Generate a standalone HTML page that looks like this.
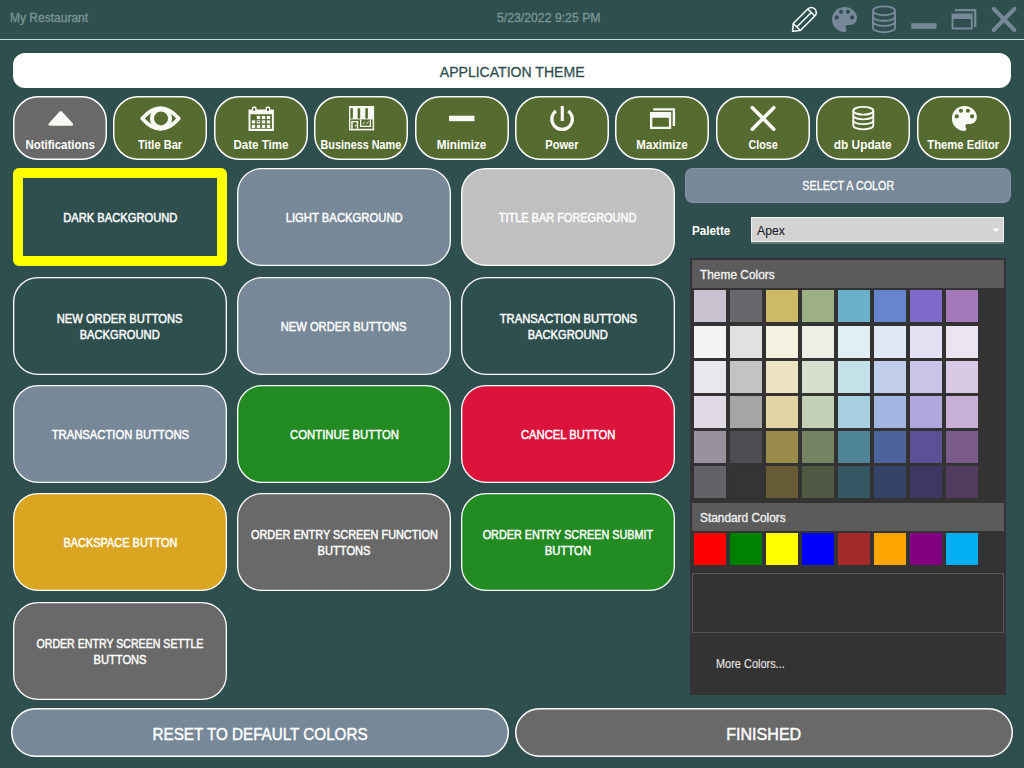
<!DOCTYPE html><html><head><meta charset="utf-8"><title>Application Theme</title><style>
*{margin:0;padding:0;box-sizing:border-box}
html,body{width:1024px;height:768px;overflow:hidden;background:#2F4F4F;font-family:"Liberation Sans",sans-serif}
.a{position:absolute}
.tx{position:absolute;white-space:nowrap;color:#fff;height:20px;line-height:20px}
.tx span{display:inline-block}
.tb{position:absolute;top:96px;width:94px;height:64px;border:1px solid #fff;box-shadow:inset 0 0 0 1px rgba(255,255,255,.35);border-radius:25px;background:#556B2F}
.gb{position:absolute;width:214px;height:98px;border:1px solid #fff;box-shadow:inset 0 0 0 1px rgba(255,255,255,.3);border-radius:25px}
.sw{position:absolute;width:32px;height:32px}
</style></head><body><div class="tx" style="left:10.20px;top:7.87px;font-size:12.5px;font-weight:400;color:#7C9696"><span id="t_rest" style="transform:scaleX(0.9610);transform-origin:0 50%;-webkit-text-stroke:0.3px #7C9696;">My Restaurant</span></div><div class="tx" style="left:496.80px;top:7.67px;font-size:12.5px;font-weight:400;color:#7C9696"><span id="t_date" style="transform:scaleX(0.9800);transform-origin:0 50%;-webkit-text-stroke:0.3px #7C9696;">5/23/2022 9:25 PM</span></div><div class="a" style="left:0;top:39px;width:1024px;height:1px;background:#C4DEDE"></div><div class="a" style="left:13px;top:53px;width:998px;height:35px;border-radius:12px;background:#fff"></div><div class="tx" style="left:212.20px;width:600px;text-align:center;top:61.64px;font-size:14.6px;font-weight:400;color:#2F4F4F"><span id="t_app" style="transform:scaleX(0.9633);-webkit-text-stroke:0.3px #2F4F4F;">APPLICATION THEME</span></div><svg class="a" style="left:11.00px;top:94.00px" width="98.00" height="68.00"><rect x="2.75" y="2.75" width="92.50" height="62.50" rx="24.25" fill="#696969" stroke="#FFFFFF" stroke-width="1.5"/></svg><div class="tx" style="left:-240.00px;width:600px;text-align:center;top:134.53px;font-size:12.6px;font-weight:700;color:#FFFFFF"><span id="t_tb0" style="transform:scaleX(0.9079);">Notifications</span></div><svg class="a" style="left:111.40px;top:94.00px" width="98.00" height="68.00"><rect x="2.75" y="2.75" width="92.50" height="62.50" rx="24.25" fill="#556B2F" stroke="#FFFFFF" stroke-width="1.5"/></svg><div class="tx" style="left:-139.60px;width:600px;text-align:center;top:134.53px;font-size:12.6px;font-weight:700;color:#FFFFFF"><span id="t_tb1" style="transform:scaleX(0.8800);">Title Bar</span></div><svg class="a" style="left:211.80px;top:94.00px" width="98.00" height="68.00"><rect x="2.75" y="2.75" width="92.50" height="62.50" rx="24.25" fill="#556B2F" stroke="#FFFFFF" stroke-width="1.5"/></svg><div class="tx" style="left:-39.20px;width:600px;text-align:center;top:134.53px;font-size:12.6px;font-weight:700;color:#FFFFFF"><span id="t_tb2" style="transform:scaleX(0.9167);">Date Time</span></div><svg class="a" style="left:312.20px;top:94.00px" width="98.00" height="68.00"><rect x="2.75" y="2.75" width="92.50" height="62.50" rx="24.25" fill="#556B2F" stroke="#FFFFFF" stroke-width="1.5"/></svg><div class="tx" style="left:61.20px;width:600px;text-align:center;top:134.53px;font-size:12.6px;font-weight:700;color:#FFFFFF"><span id="t_tb3" style="transform:scaleX(0.8617);">Business Name</span></div><svg class="a" style="left:412.60px;top:94.00px" width="98.00" height="68.00"><rect x="2.75" y="2.75" width="92.50" height="62.50" rx="24.25" fill="#556B2F" stroke="#FFFFFF" stroke-width="1.5"/></svg><div class="tx" style="left:161.60px;width:600px;text-align:center;top:134.53px;font-size:12.6px;font-weight:700;color:#FFFFFF"><span id="t_tb4" style="transform:scaleX(0.9302);">Minimize</span></div><svg class="a" style="left:513.00px;top:94.00px" width="98.00" height="68.00"><rect x="2.75" y="2.75" width="92.50" height="62.50" rx="24.25" fill="#556B2F" stroke="#FFFFFF" stroke-width="1.5"/></svg><div class="tx" style="left:262.00px;width:600px;text-align:center;top:134.53px;font-size:12.6px;font-weight:700;color:#FFFFFF"><span id="t_tb5" style="transform:scaleX(0.8816);">Power</span></div><svg class="a" style="left:613.40px;top:94.00px" width="98.00" height="68.00"><rect x="2.75" y="2.75" width="92.50" height="62.50" rx="24.25" fill="#556B2F" stroke="#FFFFFF" stroke-width="1.5"/></svg><div class="tx" style="left:362.40px;width:600px;text-align:center;top:134.53px;font-size:12.6px;font-weight:700;color:#FFFFFF"><span id="t_tb6" style="transform:scaleX(0.9161);">Maximize</span></div><svg class="a" style="left:713.80px;top:94.00px" width="98.00" height="68.00"><rect x="2.75" y="2.75" width="92.50" height="62.50" rx="24.25" fill="#556B2F" stroke="#FFFFFF" stroke-width="1.5"/></svg><div class="tx" style="left:462.80px;width:600px;text-align:center;top:134.53px;font-size:12.6px;font-weight:700;color:#FFFFFF"><span id="t_tb7" style="transform:scaleX(0.8588);">Close</span></div><svg class="a" style="left:814.20px;top:94.00px" width="98.00" height="68.00"><rect x="2.75" y="2.75" width="92.50" height="62.50" rx="24.25" fill="#556B2F" stroke="#FFFFFF" stroke-width="1.5"/></svg><div class="tx" style="left:563.20px;width:600px;text-align:center;top:134.53px;font-size:12.6px;font-weight:700;color:#FFFFFF"><span id="t_tb8" style="transform:scaleX(0.9393);">db Update</span></div><svg class="a" style="left:914.60px;top:94.00px" width="98.00" height="68.00"><rect x="2.75" y="2.75" width="92.50" height="62.50" rx="24.25" fill="#556B2F" stroke="#FFFFFF" stroke-width="1.5"/></svg><div class="tx" style="left:663.60px;width:600px;text-align:center;top:134.53px;font-size:12.6px;font-weight:700;color:#FFFFFF"><span id="t_tb9" style="transform:scaleX(0.8938);">Theme Editor</span></div><div class="a" style="left:13px;top:168px;width:214px;height:98px;background:#2F4F4F;border:10px solid #FFFF00;border-radius:6px"></div><div class="tx" style="left:-180.00px;width:600px;text-align:center;top:207.97px;font-size:12.2px;font-weight:400;color:#FFFFFF"><span id="t_g00" style="transform:scaleX(0.9168);-webkit-text-stroke:0.45px #FFFFFF;">DARK BACKGROUND</span></div><svg class="a" style="left:235.00px;top:166.00px" width="218.00" height="102.00"><rect x="2.65" y="2.65" width="212.70" height="96.70" rx="24.35" fill="#778899" stroke="#FFFFFF" stroke-width="1.3"/></svg><div class="tx" style="left:44.00px;width:600px;text-align:center;top:207.97px;font-size:12.2px;font-weight:400;color:#FFFFFF"><span id="t_g01" style="transform:scaleX(0.9262);-webkit-text-stroke:0.45px #FFFFFF;">LIGHT BACKGROUND</span></div><svg class="a" style="left:459.00px;top:166.00px" width="218.00" height="102.00"><rect x="2.65" y="2.65" width="212.70" height="96.70" rx="24.35" fill="#C0C0C0" stroke="#FFFFFF" stroke-width="1.3"/></svg><div class="tx" style="left:268.00px;width:600px;text-align:center;top:207.97px;font-size:12.2px;font-weight:400;color:#FFFFFF"><span id="t_g02" style="transform:scaleX(0.8993);-webkit-text-stroke:0.45px #FFFFFF;">TITLE BAR FOREGROUND</span></div><svg class="a" style="left:11.00px;top:274.50px" width="218.00" height="102.00"><rect x="2.65" y="2.65" width="212.70" height="96.70" rx="24.35" fill="#2F4F4F" stroke="#FFFFFF" stroke-width="1.3"/></svg><div class="tx" style="left:-180.00px;width:600px;text-align:center;top:308.97px;font-size:12.2px;font-weight:400;color:#FFFFFF"><span id="t_g10a" style="transform:scaleX(0.9153);-webkit-text-stroke:0.45px #FFFFFF;">NEW ORDER BUTTONS</span></div><div class="tx" style="left:-180.00px;width:600px;text-align:center;top:324.92px;font-size:12.2px;font-weight:400;color:#FFFFFF"><span id="t_g10b" style="transform:scaleX(0.9161);-webkit-text-stroke:0.45px #FFFFFF;">BACKGROUND</span></div><svg class="a" style="left:235.00px;top:274.50px" width="218.00" height="102.00"><rect x="2.65" y="2.65" width="212.70" height="96.70" rx="24.35" fill="#778899" stroke="#FFFFFF" stroke-width="1.3"/></svg><div class="tx" style="left:44.00px;width:600px;text-align:center;top:317.27px;font-size:12.2px;font-weight:400;color:#FFFFFF"><span id="t_g11" style="transform:scaleX(0.9153);-webkit-text-stroke:0.45px #FFFFFF;">NEW ORDER BUTTONS</span></div><svg class="a" style="left:459.00px;top:274.50px" width="218.00" height="102.00"><rect x="2.65" y="2.65" width="212.70" height="96.70" rx="24.35" fill="#2F4F4F" stroke="#FFFFFF" stroke-width="1.3"/></svg><div class="tx" style="left:268.00px;width:600px;text-align:center;top:308.97px;font-size:12.2px;font-weight:400;color:#FFFFFF"><span id="t_g12a" style="transform:scaleX(0.9242);-webkit-text-stroke:0.45px #FFFFFF;">TRANSACTION BUTTONS</span></div><div class="tx" style="left:268.00px;width:600px;text-align:center;top:324.92px;font-size:12.2px;font-weight:400;color:#FFFFFF"><span id="t_g12b" style="transform:scaleX(0.9161);-webkit-text-stroke:0.45px #FFFFFF;">BACKGROUND</span></div><svg class="a" style="left:11.00px;top:383.00px" width="218.00" height="102.00"><rect x="2.65" y="2.65" width="212.70" height="96.70" rx="24.35" fill="#778899" stroke="#FFFFFF" stroke-width="1.3"/></svg><div class="tx" style="left:-180.00px;width:600px;text-align:center;top:424.97px;font-size:12.2px;font-weight:400;color:#FFFFFF"><span id="t_g20" style="transform:scaleX(0.9242);-webkit-text-stroke:0.45px #FFFFFF;">TRANSACTION BUTTONS</span></div><svg class="a" style="left:235.00px;top:383.00px" width="218.00" height="102.00"><rect x="2.65" y="2.65" width="212.70" height="96.70" rx="24.35" fill="#228B22" stroke="#FFFFFF" stroke-width="1.3"/></svg><div class="tx" style="left:44.00px;width:600px;text-align:center;top:424.97px;font-size:12.2px;font-weight:400;color:#FFFFFF"><span id="t_g21" style="transform:scaleX(0.9316);-webkit-text-stroke:0.45px #FFFFFF;">CONTINUE BUTTON</span></div><svg class="a" style="left:459.00px;top:383.00px" width="218.00" height="102.00"><rect x="2.65" y="2.65" width="212.70" height="96.70" rx="24.35" fill="#DC143C" stroke="#FFFFFF" stroke-width="1.3"/></svg><div class="tx" style="left:268.00px;width:600px;text-align:center;top:424.97px;font-size:12.2px;font-weight:400;color:#FFFFFF"><span id="t_g22" style="transform:scaleX(0.9235);-webkit-text-stroke:0.45px #FFFFFF;">CANCEL BUTTON</span></div><svg class="a" style="left:11.00px;top:491.00px" width="218.00" height="102.00"><rect x="2.65" y="2.65" width="212.70" height="96.70" rx="24.35" fill="#DAA520" stroke="#FFFFFF" stroke-width="1.3"/></svg><div class="tx" style="left:-180.00px;width:600px;text-align:center;top:532.97px;font-size:12.2px;font-weight:400;color:#FFFFFF"><span id="t_g30" style="transform:scaleX(0.8969);-webkit-text-stroke:0.45px #FFFFFF;">BACKSPACE BUTTON</span></div><svg class="a" style="left:235.00px;top:491.00px" width="218.00" height="102.00"><rect x="2.65" y="2.65" width="212.70" height="96.70" rx="24.35" fill="#696969" stroke="#FFFFFF" stroke-width="1.3"/></svg><div class="tx" style="left:44.00px;width:600px;text-align:center;top:524.67px;font-size:12.2px;font-weight:400;color:#FFFFFF"><span id="t_g31a" style="transform:scaleX(0.8947);-webkit-text-stroke:0.45px #FFFFFF;">ORDER ENTRY SCREEN FUNCTION</span></div><div class="tx" style="left:44.00px;width:600px;text-align:center;top:540.62px;font-size:12.2px;font-weight:400;color:#FFFFFF"><span id="t_g31b" style="transform:scaleX(0.9138);-webkit-text-stroke:0.45px #FFFFFF;">BUTTONS</span></div><svg class="a" style="left:459.00px;top:491.00px" width="218.00" height="102.00"><rect x="2.65" y="2.65" width="212.70" height="96.70" rx="24.35" fill="#228B22" stroke="#FFFFFF" stroke-width="1.3"/></svg><div class="tx" style="left:268.00px;width:600px;text-align:center;top:524.67px;font-size:12.2px;font-weight:400;color:#FFFFFF"><span id="t_g32a" style="transform:scaleX(0.8885);-webkit-text-stroke:0.45px #FFFFFF;">ORDER ENTRY SCREEN SUBMIT</span></div><div class="tx" style="left:268.00px;width:600px;text-align:center;top:540.62px;font-size:12.2px;font-weight:400;color:#FFFFFF"><span id="t_g32b" style="transform:scaleX(0.9280);-webkit-text-stroke:0.45px #FFFFFF;">BUTTON</span></div><svg class="a" style="left:11.00px;top:600.00px" width="218.00" height="102.00"><rect x="2.65" y="2.65" width="212.70" height="96.70" rx="24.35" fill="#696969" stroke="#FFFFFF" stroke-width="1.3"/></svg><div class="tx" style="left:-180.00px;width:600px;text-align:center;top:633.67px;font-size:12.2px;font-weight:400;color:#FFFFFF"><span id="t_g40a" style="transform:scaleX(0.8698);-webkit-text-stroke:0.45px #FFFFFF;">ORDER ENTRY SCREEN SETTLE</span></div><div class="tx" style="left:-180.00px;width:600px;text-align:center;top:649.62px;font-size:12.2px;font-weight:400;color:#FFFFFF"><span id="t_g40b" style="transform:scaleX(0.9138);-webkit-text-stroke:0.45px #FFFFFF;">BUTTONS</span></div><svg class="a" style="left:9.00px;top:706.00px" width="502.00" height="53.00"><rect x="2.75" y="2.75" width="496.50" height="47.50" rx="23.75" fill="#778899" stroke="#FFFFFF" stroke-width="1.5"/></svg><div class="tx" style="left:-40.00px;width:600px;text-align:center;top:724.25px;font-size:16.3px;font-weight:400;color:#FFFFFF"><span id="t_reset" style="transform:scaleX(0.9345);-webkit-text-stroke:0.45px #FFFFFF;">RESET TO DEFAULT COLORS</span></div><svg class="a" style="left:513.00px;top:706.00px" width="502.00" height="53.00"><rect x="2.75" y="2.75" width="496.50" height="47.50" rx="23.75" fill="#696969" stroke="#FFFFFF" stroke-width="1.5"/></svg><div class="tx" style="left:464.20px;width:600px;text-align:center;top:725.15px;font-size:16.6px;font-weight:400;color:#FFFFFF"><span id="t_fin" style="transform:scaleX(0.9671);-webkit-text-stroke:0.45px #FFFFFF;">FINISHED</span></div><div class="a" style="left:685px;top:168px;width:326px;height:35px;border-radius:8px;background:#778899;border:1px solid rgba(255,255,255,0.12)"></div><div class="tx" style="left:548.00px;width:600px;text-align:center;top:175.54px;font-size:12px;font-weight:400;color:#FFFFFF"><span id="t_sel" style="transform:scaleX(0.8961);-webkit-text-stroke:0.3px #FFFFFF;">SELECT A COLOR</span></div><div class="tx" style="left:692.00px;top:220.80px;font-size:12.7px;font-weight:700;color:#FFFFFF"><span id="t_pal" style="transform:scaleX(0.9214);transform-origin:0 50%;">Palette</span></div><div class="a" style="left:751px;top:217px;width:253px;height:25px;background:#D3D3D3;border:1px solid #F0F0F0"></div><div class="tx" style="left:757.00px;top:220.76px;font-size:12.8px;font-weight:400;color:#1A1A28"><span id="t_apex" style="transform:scaleX(0.9552);transform-origin:0 50%;-webkit-text-stroke:0.1px #1A1A28;">Apex</span></div><svg class="a" style="left:991.5px;top:227.5px" width="8" height="5"><path d="M0.3 0.5 L7.5 0.5 L3.9 4.2 Z" fill="#FAFAFA"/></svg><div class="a" style="left:751px;top:242px;width:253px;height:1.5px;background:rgba(160,180,180,0.45)"></div><div class="a" style="left:690px;top:258px;width:316px;height:437px;background:#333333"></div><div class="a" style="left:692px;top:260px;width:312px;height:28px;background:#5B5B5B"></div><div class="tx" style="left:700.30px;top:264.74px;font-size:12px;font-weight:400;color:#F0F0F0"><span id="t_thc" style="transform:scaleX(0.9907);transform-origin:0 50%;-webkit-text-stroke:0.35px #F0F0F0;">Theme Colors</span></div><div class="sw" style="left:694px;top:290px;background:#C9C2D1"></div><div class="sw" style="left:730px;top:290px;background:#69676D"></div><div class="sw" style="left:766px;top:290px;background:#CEB966"></div><div class="sw" style="left:802px;top:290px;background:#9CB084"></div><div class="sw" style="left:838px;top:290px;background:#6BB1C9"></div><div class="sw" style="left:874px;top:290px;background:#6585CF"></div><div class="sw" style="left:910px;top:290px;background:#7E6BC9"></div><div class="sw" style="left:946px;top:290px;background:#A379BB"></div><div class="sw" style="left:694px;top:326px;background:#F4F3F6"></div><div class="sw" style="left:730px;top:326px;background:#E1E1E2"></div><div class="sw" style="left:766px;top:326px;background:#F5F1E0"></div><div class="sw" style="left:802px;top:326px;background:#EBEFE6"></div><div class="sw" style="left:838px;top:326px;background:#E1EFF4"></div><div class="sw" style="left:874px;top:326px;background:#E0E7F5"></div><div class="sw" style="left:910px;top:326px;background:#E5E1F4"></div><div class="sw" style="left:946px;top:326px;background:#EDE4F1"></div><div class="sw" style="left:694px;top:361px;background:#E9E7ED"></div><div class="sw" style="left:730px;top:361px;background:#C3C2C5"></div><div class="sw" style="left:766px;top:361px;background:#EBE3C2"></div><div class="sw" style="left:802px;top:361px;background:#D7DFCE"></div><div class="sw" style="left:838px;top:361px;background:#C4E0E9"></div><div class="sw" style="left:874px;top:361px;background:#C1CEEC"></div><div class="sw" style="left:910px;top:361px;background:#CBC4E9"></div><div class="sw" style="left:946px;top:361px;background:#DAC9E4"></div><div class="sw" style="left:694px;top:396px;background:#DFDAE3"></div><div class="sw" style="left:730px;top:396px;background:#A5A4A7"></div><div class="sw" style="left:766px;top:396px;background:#E2D5A3"></div><div class="sw" style="left:802px;top:396px;background:#C4D0B5"></div><div class="sw" style="left:838px;top:396px;background:#A6D0DF"></div><div class="sw" style="left:874px;top:396px;background:#A3B6E2"></div><div class="sw" style="left:910px;top:396px;background:#B2A6DF"></div><div class="sw" style="left:946px;top:396px;background:#C8AFD6"></div><div class="sw" style="left:694px;top:431px;background:#97929D"></div><div class="sw" style="left:730px;top:431px;background:#4F4D52"></div><div class="sw" style="left:766px;top:431px;background:#9A8B4C"></div><div class="sw" style="left:802px;top:431px;background:#758463"></div><div class="sw" style="left:838px;top:431px;background:#508597"></div><div class="sw" style="left:874px;top:431px;background:#4C649B"></div><div class="sw" style="left:910px;top:431px;background:#5E5097"></div><div class="sw" style="left:946px;top:431px;background:#7A5B8C"></div><div class="sw" style="left:694px;top:466px;background:#646168"></div><div class="sw" style="left:730px;top:466px;background:#343436"></div><div class="sw" style="left:766px;top:466px;background:#675C33"></div><div class="sw" style="left:802px;top:466px;background:#4E5842"></div><div class="sw" style="left:838px;top:466px;background:#365864"></div><div class="sw" style="left:874px;top:466px;background:#324268"></div><div class="sw" style="left:910px;top:466px;background:#3F3664"></div><div class="sw" style="left:946px;top:466px;background:#523C5E"></div><div class="a" style="left:692px;top:503px;width:312px;height:28px;background:#5B5B5B"></div><div class="tx" style="left:700.20px;top:508.04px;font-size:12px;font-weight:400;color:#F0F0F0"><span id="t_stc" style="transform:scaleX(0.9885);transform-origin:0 50%;-webkit-text-stroke:0.35px #F0F0F0;">Standard Colors</span></div><div class="sw" style="left:694px;top:533px;background:#FF0000"></div><div class="sw" style="left:730px;top:533px;background:#008000"></div><div class="sw" style="left:766px;top:533px;background:#FFFF00"></div><div class="sw" style="left:802px;top:533px;background:#0000FF"></div><div class="sw" style="left:838px;top:533px;background:#A52A2A"></div><div class="sw" style="left:874px;top:533px;background:#FFA500"></div><div class="sw" style="left:910px;top:533px;background:#800080"></div><div class="sw" style="left:946px;top:533px;background:#00B0F0"></div><div class="a" style="left:692px;top:573px;width:312px;height:60px;border:1px solid #555555"></div><div class="tx" style="left:715.80px;top:654.24px;font-size:12px;font-weight:400;color:#E8E8E8"><span id="t_more" style="transform:scaleX(0.9122);transform-origin:0 50%;-webkit-text-stroke:0.1px #E8E8E8;">More Colors...</span></div><svg class="a" style="left:0;top:0;z-index:10;pointer-events:none" width="1024" height="768" viewBox="0 0 1024 768"><g transform="translate(792.2,31.6) rotate(-45)" fill="none" stroke="#F4FAFA" stroke-width="1.6" stroke-linejoin="round"><path d="M0.6,0 L6.5,-5 H27 A5,5 0 0,1 27,5 H6.5 Z"/><path d="M6.5,-5 V5 M27,-5 V5 M6.5,0 H27"/></g><g transform="translate(827.8,2.8) scale(1.389)" fill="#778899"><path d="M17.5,12A1.5,1.5 0 0,1 16,10.5A1.5,1.5 0 0,1 17.5,9A1.5,1.5 0 0,1 19,10.5A1.5,1.5 0 0,1 17.5,12M14.5,8A1.5,1.5 0 0,1 13,6.5A1.5,1.5 0 0,1 14.5,5A1.5,1.5 0 0,1 16,6.5A1.5,1.5 0 0,1 14.5,8M9.5,8A1.5,1.5 0 0,1 8,6.5A1.5,1.5 0 0,1 9.5,5A1.5,1.5 0 0,1 11,6.5A1.5,1.5 0 0,1 9.5,8M6.5,12A1.5,1.5 0 0,1 5,10.5A1.5,1.5 0 0,1 6.5,9A1.5,1.5 0 0,1 8,10.5A1.5,1.5 0 0,1 6.5,12M12,3A9,9 0 0,0 3,12A9,9 0 0,0 12,21A1.5,1.5 0 0,0 13.5,19.5C13.5,19.11 13.35,18.76 13.11,18.5C12.88,18.23 12.73,17.88 12.73,17.5A1.5,1.5 0 0,1 14.23,16H16A5,5 0 0,0 21,11C21,6.58 16.97,3 12,3Z"/></g><g fill="none" stroke="#778899" stroke-width="1.9"><ellipse cx="884" cy="10.8" rx="11" ry="4.4"/><path d="M873,16.4 A11,4.4 0 0,0 895,16.4"/><path d="M873,21.5 A11,4.4 0 0,0 895,21.5"/><path d="M873,10.8 V27.8 A11,4.4 0 0,0 895,27.8 V10.8"/></g><rect x="911.3" y="23.2" width="25.3" height="5.6" fill="#778899"/><path fill="#778899" fill-rule="evenodd" d="M951.6,13.5H972.7V29.5H951.6Z M953.5,19.1V27.6H970.8000000000001V19.1Z"/><path fill="#778899" d="M954.9,9.05H976.4V26.9H974.1V11.350000000000001H954.9Z"/><path d="M993.8,8.8 L1014.4,30 M1014.4,8.8 L993.8,30" stroke="#778899" stroke-width="4" stroke-linecap="round"/><path d="M50,124.3 H71.6 L60.8,112.6 Z" fill="#F8F8F4" stroke="#F8F8F4" stroke-width="3" stroke-linejoin="round"/><path d="M142.2,118.5 Q160.5,97.8 178.8,118.5 Q160.5,139.2 142.2,118.5 Z" fill="none" stroke="#F8F8F4" stroke-width="3.8" stroke-linejoin="round"/><circle cx="161" cy="118.4" r="9" fill="none" stroke="#F8F8F4" stroke-width="4"/><g fill="#F8F8F4"><path fill-rule="evenodd" d="M248.5,109.5 H273.9 V130.9 H248.5 Z M250.5,114.3 V128.7 H271.9 V114.3 Z"/><rect x="252" y="106.4" width="4.6" height="4.5" rx="1.6"/><rect x="265.6" y="106.4" width="4.6" height="4.5" rx="1.6"/><rect x="256.8" y="115.9" width="3.4" height="3.2"/><rect x="261.8" y="115.9" width="3.4" height="3.2"/><rect x="266.8" y="115.9" width="3.4" height="3.2"/><rect x="251.8" y="120.3" width="3.4" height="3.2"/><rect x="256.8" y="120.3" width="3.4" height="3.2"/><rect x="261.8" y="120.3" width="3.4" height="3.2"/><rect x="266.8" y="120.3" width="3.4" height="3.2"/><rect x="251.8" y="124.8" width="3.4" height="3.2"/><rect x="256.8" y="124.8" width="3.4" height="3.2"/><rect x="261.8" y="124.8" width="3.4" height="3.2"/><rect x="266.8" y="124.8" width="3.4" height="3.2"/></g><rect x="253.4" y="108.1" width="1.7" height="2.7" rx="0.6" fill="#34421C"/><rect x="267" y="108.1" width="1.8" height="2.7" rx="0.6" fill="#34421C"/><rect x="257.8" y="121" width="1.5" height="1.1" fill="#34421C"/><g><rect x="349" y="106" width="25.1" height="24.4" fill="#F8F8F4"/><path d="M350.3,108.3 h2.6 v9.2 a1.3,1.3 0 0,1 -2.6,0 Z" fill="#556B2F"/><path d="M357.6,108.3 h2.6 v9.2 a1.3,1.3 0 0,1 -2.6,0 Z" fill="#556B2F"/><path d="M365.3,108.3 h2.6 v9.2 a1.3,1.3 0 0,1 -2.6,0 Z" fill="#556B2F"/><rect x="350.3" y="119.4" width="22.3" height="9.4" fill="#556B2F"/><path fill="#F8F8F4" d="M351.2,128.8 V121.1 H358.2 V128.8 H356.8 V122.2 H352.7 V128.8 Z"/><rect x="355.1" y="124.7" width="1.1" height="1.9" fill="#F8F8F4"/><path fill="#F8F8F4" d="M360,119.4 H361.3 V125.8 H369.8 V119.4 H371 V127 H360 Z"/><path d="M362.5,124.2 L365.1,121.7 M366.3,124.2 L369,121.3" stroke="#F8F8F4" stroke-width="0.9"/></g><rect x="449" y="115.7" width="25.5" height="5.5" fill="#F8F8F4"/><path d="M555.93,110.96 A10.25,10.25 0 1,0 568.27,110.96" fill="none" stroke="#F8F8F4" stroke-width="3.2"/><rect x="560.7" y="106" width="3.2" height="15" fill="#F8F8F4"/><path fill="#F8F8F4" fill-rule="evenodd" d="M650,112.1H671.2V129H650Z M652.3,117.8V126.7H668.9000000000001V117.8Z"/><path fill="#F8F8F4" d="M653.2,108.2H675.1V126H672.7V110.60000000000001H653.2Z"/><path d="M752.3,107.7 L773.8,129.2 M773.8,107.7 L752.3,129.2" stroke="#F8F8F4" stroke-width="3.6" stroke-linecap="round"/><g fill="none" stroke="#F8F8F4" stroke-width="1.9"><ellipse cx="863.3" cy="110.75" rx="10.0" ry="3.9"/><path d="M853.3,115.6 A10.0,3.75 0 0,0 873.3,115.6"/><path d="M853.3,120.4 A10.0,3.75 0 0,0 873.3,120.4"/><path d="M853.3,110.75 V125.4 A10.0,4.0 0 0,0 873.3,125.4 V110.75"/></g><g transform="translate(947.73,101.73) scale(1.389)" fill="#F8F8F4"><path d="M17.5,12A1.5,1.5 0 0,1 16,10.5A1.5,1.5 0 0,1 17.5,9A1.5,1.5 0 0,1 19,10.5A1.5,1.5 0 0,1 17.5,12M14.5,8A1.5,1.5 0 0,1 13,6.5A1.5,1.5 0 0,1 14.5,5A1.5,1.5 0 0,1 16,6.5A1.5,1.5 0 0,1 14.5,8M9.5,8A1.5,1.5 0 0,1 8,6.5A1.5,1.5 0 0,1 9.5,5A1.5,1.5 0 0,1 11,6.5A1.5,1.5 0 0,1 9.5,8M6.5,12A1.5,1.5 0 0,1 5,10.5A1.5,1.5 0 0,1 6.5,9A1.5,1.5 0 0,1 8,10.5A1.5,1.5 0 0,1 6.5,12M12,3A9,9 0 0,0 3,12A9,9 0 0,0 12,21A1.5,1.5 0 0,0 13.5,19.5C13.5,19.11 13.35,18.76 13.11,18.5C12.88,18.23 12.73,17.88 12.73,17.5A1.5,1.5 0 0,1 14.23,16H16A5,5 0 0,0 21,11C21,6.58 16.97,3 12,3Z"/></g></svg></body></html>
